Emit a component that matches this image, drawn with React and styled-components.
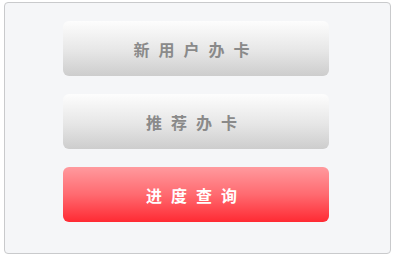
import React from "react";
import styled, { createGlobalStyle } from "styled-components";

const GlobalStyle = createGlobalStyle`
  html, body {
    margin: 0;
    padding: 0;
    background: #ffffff;
  }
  body {
    font-family: "Noto Sans CJK SC", "Liberation Sans", sans-serif;
  }
`;

const Page = styled.div`
  padding: 2px 5px 2px 4px;
`;

const Panel = styled.div`
  box-sizing: border-box;
  width: 387px;
  height: 252px;
  border: 1px solid #c9cacc;
  border-radius: 4px;
  background: #f5f6f8;
  display: flex;
  flex-direction: column;
  align-items: center;
  gap: 18px;
  padding-top: 18px;
  padding-right: 3px;
`;

const Button = styled.button`
  width: 266px;
  height: 55px;
  border: none;
  border-radius: 6px;
  padding: 0;
  font-family: "Noto Sans CJK SC", sans-serif;
  font-size: 16px;
  font-weight: 700;
  letter-spacing: 9px;
  line-height: 1;
  cursor: pointer;
  color: ${(p) => (p.$primary ? "#ffffff" : "#8a8a8a")};
  background: ${(p) =>
    p.$primary
      ? "linear-gradient(to bottom, #ff9a9e 0%, #ff6a70 50%, #ff2a33 100%)"
      : "linear-gradient(to bottom, #fdfdfd 0%, #e6e6e6 55%, #cdcdcd 100%)"};
`;

const items = [
  { label: "新用户办卡" },
  { label: "推荐办卡" },
  { label: "进度查询", primary: true },
];

export default function App() {
  return (
    <>
      <GlobalStyle />
      <Page>
        <Panel>
          {items.map((item) => (
            <Button key={item.label} $primary={item.primary}>
              {item.label}
            </Button>
          ))}
        </Panel>
      </Page>
    </>
  );
}
